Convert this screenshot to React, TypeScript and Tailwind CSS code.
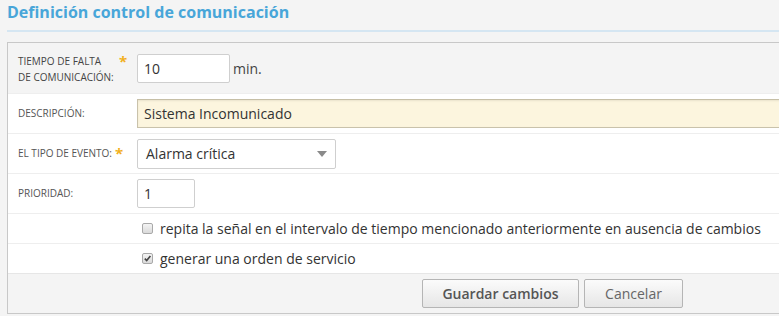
import React from "react";

const font = { fontFamily: '"Open Sans", "Liberation Sans", sans-serif' };

function Star() {
  return <span className="text-[#f2b01e] text-[15px] leading-none font-bold">*</span>;
}

export default function App() {
  return (
    <div className="w-[779px] h-[316px] overflow-hidden bg-[#f4f4f4]" style={font}>
      <div className="pl-[7px] w-[1100px]">
        <div className="h-[30px] pt-[1px] text-[16px] font-bold text-[#48a6d9] leading-[22px]">
          Definición control de comunicación
        </div>
        <div className="h-[2px] bg-[#d5e6f2]" />
        <div className="h-[10px]" />
        <div className="border-t border-l border-b border-[#c8c8c8]">
          {/* Row 1 */}
          <div className="flex items-center h-[50px] bg-[#f4f4f4]">
            <div className="w-[129px] flex items-start pl-[10px] text-[10px] leading-[16px] text-[#444] uppercase">
              <div className="w-[100px] pt-[1px]">TIEMPO DE FALTA<br />DE COMUNICACIÓN:</div>
              <div className="pt-[2px] pl-[1px]"><Star /></div>
            </div>
            <div className="w-[93px] h-[29px] border border-[#cfcfcf] rounded-[2px] bg-white flex items-center pl-[6px] text-[14px] text-[#333]">10</div>
            <span className="ml-[3px] text-[14px] text-[#444]">min.</span>
          </div>
          {/* Row 2 */}
          <div className="flex items-center h-[40px] bg-white border-t border-[#eeeeee]">
            <div className="w-[129px] pl-[10px] text-[10px] text-[#555]">DESCRIPCIÓN:</div>
            <div className="flex-1 h-[29px] border border-[#c9c2ab] border-t-[#c6bfa6] bg-[#fcf5de] flex items-center pl-[6px] text-[14px] text-[#333] shadow-[inset_0_1px_2px_rgba(0,0,0,0.08)]">Sistema Incomunicado</div>
          </div>
          {/* Row 3 */}
          <div className="flex items-center h-[40px] bg-white border-t border-[#eeeeee]">
            <div className="w-[129px] pl-[10px] text-[10px] text-[#555] flex items-center gap-[3px]">
              <span>EL TIPO DE EVENTO:</span><Star />
            </div>
            <div className="w-[199px] h-[30px] border border-[#cfcfcf] rounded-[2px] bg-white flex items-center justify-between pl-[8px] pr-[5px] text-[14px] text-[#333]">
              <span>Alarma crítica</span>
              <svg width="10" height="6" viewBox="0 0 10 6" className="mr-[3px]"><path d="M0 0 L10 0 L5 6 Z" fill="#8a8a8a" /></svg>
            </div>
          </div>
          {/* Row 4 */}
          <div className="flex items-center h-[40px] bg-white border-t border-[#eeeeee]">
            <div className="w-[129px] pl-[10px] text-[10px] text-[#555]">PRIORIDAD:</div>
            <div className="w-[58px] h-[29px] border border-[#cfcfcf] rounded-[2px] bg-white flex items-center pl-[6px] text-[14px] text-[#333]">1</div>
          </div>
          {/* Row 5 */}
          <div className="flex items-center h-[30px] bg-white border-t border-[#eeeeee]">
            <div className="w-[134px]" />
            <div className="w-[11px] h-[11px] rounded-[2px] border border-[#a9a9a9] bg-gradient-to-b from-[#f4f4f4] to-[#dadada]" />
            <span className="ml-[7px] text-[14px] text-[#333]">repita la señal en el intervalo de tiempo mencionado anteriormente en ausencia de cambios</span>
          </div>
          {/* Row 6 */}
          <div className="flex items-center h-[30px] bg-white border-t border-[#eeeeee]">
            <div className="w-[134px]" />
            <div className="w-[11px] h-[11px] rounded-[2px] border border-[#a9a9a9] bg-gradient-to-b from-[#f4f4f4] to-[#dadada] flex items-center justify-center">
              <svg width="9" height="9" viewBox="0 0 9 9"><path d="M1.8 4.6 L3.7 6.6 L7.4 2" stroke="#444" strokeWidth="1.6" fill="none" /></svg>
            </div>
            <span className="ml-[7px] text-[14px] text-[#333]">generar una orden de servicio</span>
          </div>
          {/* Footer */}
          <div className="flex items-center h-[40px] bg-[#f4f4f4] border-t border-[#e6e6e6] pl-[414px] gap-[5px]">
            <button className="w-[157px] h-[29px] border border-[#b5b5b5] rounded-[2px] bg-gradient-to-b from-[#fbfbfb] to-[#e6e6e6] text-[14px] font-semibold text-[#555]">Guardar cambios</button>
            <button className="w-[99px] h-[29px] border border-[#b5b5b5] rounded-[2px] bg-gradient-to-b from-[#fbfbfb] to-[#e6e6e6] text-[14px] text-[#666]">Cancelar</button>
          </div>
        </div>
      </div>
    </div>
  );
}
